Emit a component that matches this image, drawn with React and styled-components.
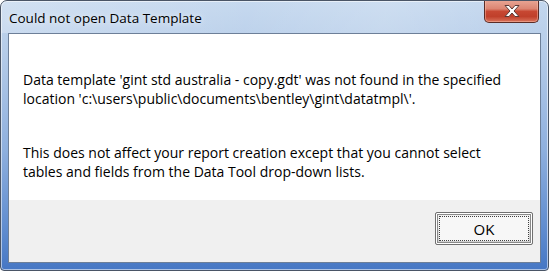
import React from "react";
import styled, { createGlobalStyle } from "styled-components";

const Global = createGlobalStyle`
  html, body {
    margin: 0;
    padding: 0;
    background: #ffffff;
  }
  body {
    font-family: "Open Sans", "Noto Sans", sans-serif;
  }
`;

const App = () => {
  return (
    <>
      <Global />
      <Window>
        <TitleBar>
          <Title>Could not open Data Template</Title>
          <CloseButton aria-label="Close">
            <svg width="22" height="14" viewBox="0 0 22 14">
              <path
                d="M4 1.5 L8 1.5 L11 5 L14 1.5 L18 1.5 L13 7 L18 12.5 L14 12.5 L11 9 L8 12.5 L4 12.5 L9 7 Z"
                fill="#ffffff"
                stroke="#5a3a36"
                strokeWidth="1"
                strokeLinejoin="round"
              />
            </svg>
          </CloseButton>
        </TitleBar>
        <Client>
          <Body>
            <Message>
              Data template 'gint std australia - copy.gdt' was not found in the specified
              <br />
              location 'c:\users\public\documents\bentley\gint\datatmpl\'.
            </Message>
            <Message>
              This does not affect your report creation except that you cannot select
              <br />
              tables and fields from the Data Tool drop-down lists.
            </Message>
          </Body>
          <Footer>
            <OkButton>
              <Focus>OK</Focus>
            </OkButton>
          </Footer>
        </Client>
      </Window>
    </>
  );
};

export default App;

const Window = styled.div`
  width: 549px;
  height: 271px;
  box-sizing: border-box;
  display: flex;
  flex-direction: column;
  border: 1px solid #4a5566;
  border-radius: 7px 7px 4px 4px;
  background: linear-gradient(
    180deg,
    #c3d7ee 0%,
    #b4cbe8 20%,
    #8fb0de 55%,
    #5f8ccf 85%,
    #4677c4 100%
  );
  box-shadow: inset 0 0 0 1px rgba(255, 255, 255, 0.55);
  overflow: hidden;
`;

const TitleBar = styled.div`
  height: 32px;
  flex: none;
  display: flex;
  align-items: flex-start;
  justify-content: space-between;
  padding: 0 9px 0 8px;
  background: linear-gradient(
    100deg,
    rgba(255, 255, 255, 0.25) 0%,
    rgba(255, 255, 255, 0.05) 45%,
    rgba(255, 255, 255, 0.18) 70%,
    rgba(255, 255, 255, 0) 100%
  );
`;

const Title = styled.div`
  font-size: 13.5px;
  color: #000000;
  padding-top: 8px;
  line-height: 18px;
  text-shadow: 0 0 6px rgba(255, 255, 255, 0.9);
`;

const CloseButton = styled.button`
  width: 55px;
  height: 23px;
  margin-top: -1px;
  padding: 0;
  display: flex;
  align-items: center;
  justify-content: center;
  border: 1px solid #5b2c26;
  border-top: none;
  border-radius: 0 0 5px 5px;
  background: linear-gradient(
    180deg,
    #e9a796 0%,
    #dc8572 40%,
    #c74732 52%,
    #c0402b 75%,
    #d9735c 100%
  );
  box-shadow: inset 0 0 0 1px rgba(255, 200, 180, 0.45);
`;

const Client = styled.div`
  flex: 1;
  margin: 0 7px 7px 7px;
  display: flex;
  flex-direction: column;
  border: 1px solid #6d7f98;
  background: #ffffff;
`;

const Body = styled.div`
  flex: none;
  height: 166px;
  box-sizing: border-box;
  padding: 36px 14px 0 14px;
  background: #ffffff;
`;

const Message = styled.p`
  margin: 0 0 35px 0;
  font-size: 14px;
  line-height: 19px;
  color: #000000;
  white-space: nowrap;
`;

const Footer = styled.div`
  flex: 1;
  display: flex;
  justify-content: flex-end;
  align-items: flex-start;
  padding: 12px 7px 0 0;
  background: #f0f0f0;
`;

const OkButton = styled.button`
  width: 98px;
  height: 33px;
  padding: 3px;
  box-sizing: border-box;
  border: 1px solid #707070;
  border-radius: 2px;
  background: linear-gradient(180deg, #f2f2f2 0%, #ebebeb 50%, #dddddd 51%, #cfcfcf 100%);
  box-shadow: inset 0 0 0 1px #ffffff, inset 0 0 0 2px #8a8a8a;
  font-family: "Open Sans", "Noto Sans", sans-serif;
`;

const Focus = styled.span`
  display: flex;
  align-items: center;
  justify-content: center;
  width: 100%;
  height: 100%;
  box-sizing: border-box;
  border: 1px dotted #404040;
  background: #f7f7f7;
  font-size: 15px;
  color: #000000;
`;
